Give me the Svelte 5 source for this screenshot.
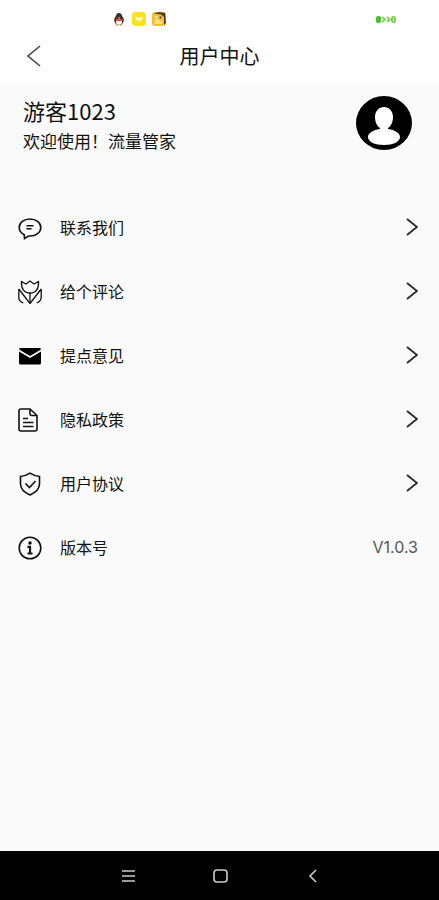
<script lang="ts">
	interface MenuItem {
		icon: string;
		label: string;
	}

	const items: MenuItem[] = [
		{ icon: 'chat', label: '联系我们' },
		{ icon: 'flower', label: '给个评论' },
		{ icon: 'mail', label: '提点意见' },
		{ icon: 'document', label: '隐私政策' },
		{ icon: 'shield', label: '用户协议' }
	];

	const version = 'V1.0.3';
</script>

{#snippet itemIcon(name: string)}
	<svg class="item-icon" viewBox="0 0 24 24" aria-hidden="true">
		{#if name === 'chat'}
			<path d="M6.2 18.8C3 17 1.2 14.5 1.2 11.5 1.2 6.5 6 3 12 3s10.8 3.5 10.8 8.5S18 20 12 20h-1.500L6.500 22.500z" />
			<path d="M8.5 9.8h7M8.5 12.8h5" />
		{:else if name === 'flower'}
			<g stroke-width="1.3">
				<path d="M3.500 1.500 8 4l4-3 4 3 4.500-2.500c.6 7-2.500 11.500-8.500 11.500S2.900 8.500 3.500 1.500z" />
				<path d="M12 13v10.500" />
				<path d="M.8 9v8.500q0 3.500 4.500 5.500M.8 9 12 23.500M23.200 9v8.500q0 3.500-4.500 5.500M23.200 9 12 23.500" />
			</g>
		{:else if name === 'mail'}
			<path class="solid" d="M1 5.500Q1 4 2.500 4h19Q23 4 23 5.500L12 12z" />
			<path class="solid" d="M1 7.500l11 6.500 11-6.500V19q0 1.500-1.500 1.500h-19Q1 20.500 1 19z" />
		{:else if name === 'document'}
			<path d="M1 3q0-2 2-2h9l7 6.500V21q0 2-2 2H3q-2 0-2-2z" />
			<path d="M12 1v4.500q0 2 2 2h5M5 10.500h5M5 14.500h10.500M5 18.500h10.500" />
		{:else if name === 'shield'}
			<path d="M12 1.200c3 2 6 3 9.500 3.300V12c0 5-4 8.500-9.500 11-5.500-2.500-9.500-6-9.500-11V4.500c3.500-.3 6.500-1.300 9.500-3.300z" />
			<path d="m7.500 11.500 4 4 6-6.500" />
		{:else}
			<circle cx="12" cy="12" r="10.8" />
			<circle class="solid" cx="12" cy="7" r="1.7" />
			<path d="M9.500 10.800H12V17M9.500 17.500h5" stroke-width="2.2" />
		{/if}
	</svg>
{/snippet}

<div class="screen">
	<div class="status-bar">
		<div class="notifications">
			<svg viewBox="0 0 14 14" aria-hidden="true">
				<ellipse cx="7" cy="8" rx="4.8" ry="5" fill="#3b2a2e" />
				<ellipse cx="7" cy="4.5" rx="3" ry="3.5" fill="#3b2a2e" />
				<ellipse cx="7" cy="9.8" rx="3" ry="3" fill="#fff" />
				<path d="M3.500 6.500q3.500 2 7 0v1.800q-3.500 1.800-7 0z" fill="#e02d25" />
				<path d="M5.500 5h3L7 6.200z" fill="#f5b51b" />
				<path d="M3.500 13h2.500M8 13h2.500" stroke="#d9822b" />
			</svg>
			<svg viewBox="0 0 14 14" aria-hidden="true">
				<rect width="14" height="14" rx="3.5" fill="#fbe31c" />
				<path d="M3.500 5q1.500-1 3.500 1.500Q9 4 10.500 5 10 9 7 9T3.500 5z" fill="#fff" />
			</svg>
			<svg viewBox="0 0 14 14" aria-hidden="true">
				<rect width="14" height="14" rx="3" fill="#f6bd32" />
				<path d="M2 1.500Q6-.5 13 1l1 10-2 2V5L9 2.500z" fill="#4d3826" />
				<path d="M2 9q2-4 5-1t4-1l-1 5H3z" fill="#ffe078" />
				<circle cx="4.5" cy="5" r="1" fill="#fff" />
				<circle cx="8.5" cy="5.5" r="1" fill="#3c2b20" />
			</svg>
		</div>
		<svg class="battery" viewBox="0 0 20 7" aria-hidden="true">
			<rect width="5" height="7" rx="2" fill="#50b936" />
			<g fill="none" stroke="#80d45b" stroke-width="2">
				<path d="m6 1 3 2.500L6 6M11 1l3 2.500L11 6" />
				<rect x="16" y="1" width="3" height="5" rx="1" />
			</g>
		</svg>
	</div>

	<header class="title-bar">
		<button class="back" aria-label="返回">
			<svg viewBox="0 0 14 22" aria-hidden="true"><path d="M13 1 1 11l12 10" /></svg>
		</button>
		<h1>用户中心</h1>
	</header>

	<main>
		<section class="profile">
			<div>
				<h2>游客1023</h2>
				<p>欢迎使用！流量管家</p>
			</div>
			<svg class="avatar" viewBox="0 0 56 54" role="img" aria-label="头像">
				<ellipse cx="28" cy="27" rx="28" ry="27" />
				<path
					d="M28 11c-5 0-9 4-9 10 0 5 2 9 5 11v1c-7 1-12 4-12 8 0 5 7 8 16 8s16-3 16-8c0-4-5-7-12-8v-1c3-2 5-6 5-11 0-6-4-10-9-10z"
					fill="#fff"
				/>
			</svg>
		</section>

		<ul class="menu">
			{#each items as item (item.icon)}
				<li>
					<button class="row">
						{@render itemIcon(item.icon)}
						<span class="label">{item.label}</span>
						<svg class="chevron" viewBox="0 0 12 18" aria-hidden="true"><path d="m1 1 10 8L1 17" /></svg>
					</button>
				</li>
			{/each}
			<li class="row">
				{@render itemIcon('info')}
				<span class="label">版本号</span>
				<span class="version">{version}</span>
			</li>
		</ul>
	</main>

	<nav class="system-nav" aria-label="系统导航">
		<button aria-label="最近任务">
			<svg viewBox="0 0 16 16" aria-hidden="true"><path d="M2 3h13M2 8h13M2 13h13" /></svg>
		</button>
		<button aria-label="主屏幕">
			<svg viewBox="0 0 16 16" aria-hidden="true"><rect x="2" y="2" width="13" height="12" rx="3" /></svg>
		</button>
		<button aria-label="返回上一页">
			<svg viewBox="0 0 16 16" aria-hidden="true"><path d="M12 2 6 8l6 6" /></svg>
		</button>
	</nav>
</div>

<style>
	:global(body) {
		margin: 0;
	}

	.screen {
		display: flex;
		flex-direction: column;
		min-height: 100vh;
		background: #fafafa;
		color: #111;
		font-family: 'Noto Sans CJK SC', sans-serif;
	}

	svg {
		display: block;
		flex-shrink: 0;
	}

	button {
		padding: 0;
		border: none;
		background: none;
		color: inherit;
		font: inherit;
		cursor: pointer;
	}

	h1,
	h2,
	p,
	ul {
		margin: 0;
		padding: 0;
		font-weight: 400;
	}

	.status-bar {
		display: flex;
		align-items: center;
		justify-content: space-between;
		height: 38px;
		padding: 0 43px 0 112px;
		background: #fff;
	}

	.notifications {
		display: flex;
		gap: 6px;
	}

	.notifications svg {
		width: 14px;
		height: 14px;
	}

	.battery {
		width: 20px;
		height: 7px;
	}

	.title-bar {
		display: grid;
		grid-template-columns: 1fr auto 1fr;
		align-items: center;
		height: 45px;
		padding: 0 24px 10px;
		background: #fff;
		box-sizing: border-box;
	}

	.back {
		justify-self: start;
		padding: 0 3px;
	}

	.back svg {
		width: 14px;
		height: 22px;
		fill: none;
		stroke: #444;
		stroke-width: 1.5;
	}

	h1 {
		font-size: 20px;
		line-height: 28px;
	}

	main {
		flex: 1;
	}

	.profile {
		display: flex;
		align-items: flex-start;
		justify-content: space-between;
		min-height: 100px;
		padding: 13px 27px 0 23px;
	}

	h2 {
		font-size: 22px;
		line-height: 28px;
	}

	.profile p {
		font-size: 17px;
		line-height: 34px;
	}

	.avatar {
		width: 56px;
		height: 54px;
	}

	.menu {
		list-style: none;
	}

	.row {
		display: flex;
		align-items: center;
		gap: 18px;
		width: 100%;
		height: 64px;
		padding: 0 21px 0 18px;
		box-sizing: border-box;
		text-align: left;
	}

	.item-icon {
		width: 24px;
		height: 24px;
		fill: none;
		stroke: #111;
		stroke-width: 1.6;
	}

	.solid {
		fill: #000;
		stroke: none;
	}

	.label,
	.version {
		padding-bottom: 2px;
		font-size: 16px;
		line-height: 24px;
	}

	.label {
		flex: 1;
	}

	.chevron {
		width: 12px;
		height: 18px;
		padding-bottom: 2px;
		fill: none;
		stroke: #222;
		stroke-width: 1.7;
	}

	.version {
		color: #555;
		font-family: Inter, sans-serif;
	}

	.system-nav {
		display: flex;
		justify-content: center;
		gap: 76px;
		height: 49px;
		background: #000;
	}

	.system-nav svg {
		width: 16px;
		height: 16px;
		fill: none;
		stroke: #ccc;
		stroke-width: 1.6;
	}
</style>
